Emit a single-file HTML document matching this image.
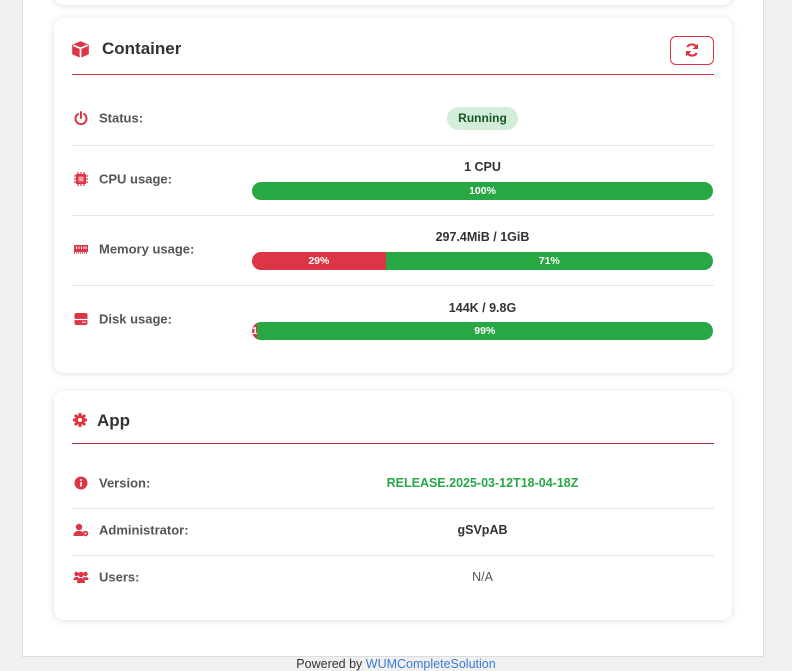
<!DOCTYPE html>
<html><head><style>
*{box-sizing:border-box;margin:0;padding:0}
body{width:792px;height:665px;overflow:hidden;background:#f0f0f0;font-family:"Liberation Sans",sans-serif;color:#333;position:relative}
.panel{position:absolute;left:22px;top:-2px;width:742px;height:659px;background:#fff;border:1px solid #ddd}
.card{position:absolute;left:54px;width:678px;background:#fff;border-radius:10px;box-shadow:0 1px 8px rgba(0,0,0,.12)}
.abs{position:absolute}
.lbl{position:absolute;left:99px;font-size:13px;color:#555;font-weight:bold;transform:translateY(-50%)}
.ico{position:absolute;left:73px;width:16px;height:16px;transform:translateY(-50%)}
.div{position:absolute;left:72px;width:642px;height:1px;background:#e6e6e6}
.ctr{position:absolute;left:252px;width:461px;text-align:center;font-size:12.5px;font-weight:bold;color:#333;transform:translateY(-50%)}
.bar{position:absolute;left:252px;width:461px;height:18px;border-radius:9px;overflow:hidden;display:flex;font-size:10.5px;color:#fff;font-weight:bold;line-height:18px}
.g{background:#28a745;text-align:center}.r{background:#dc3545;text-align:center}
.h{position:absolute;font-size:17px;font-weight:bold;color:#333;transform:translateY(-50%)}
.line{position:absolute;left:72px;width:642px;height:1px;background:#dc3545}
</style></head><body>
<div class="panel"></div>
<div class="card" style="top:-20px;height:25px"></div>
<div class="card" style="top:18px;height:355px"></div>
<div class="card" style="top:391px;height:229px"></div>

<svg class="abs" style="left:71px;top:40px" width="19" height="19" viewBox="0 0 16 16"><path d="M8 1L15 4V12L8 15L1 12V4Z" fill="#dc3545"/><path d="M8 7L2 4.5M8 7L14 4.5M8 7V15" stroke="#fff" stroke-width="1.5" fill="none"/></svg>
<div class="h" style="left:102px;top:49px">Container</div>
<div class="abs" style="left:670px;top:36px;width:44px;height:29px;border:1px solid #dc3545;border-radius:6px"></div>
<svg class="abs" style="left:684px;top:42px" width="16" height="16" viewBox="0 0 16 16"><path d="M13 6A5.5 5.5 0 0 0 3.2 5M3 10A5.5 5.5 0 0 0 12.8 11" stroke="#dc3545" stroke-width="2.2" fill="none"/><path d="M14 1.5V7H8.5Z M2 14.5V9H7.5Z" fill="#dc3545"/></svg>
<div class="line" style="top:74px"></div>

<svg class="ico" style="top:118px" viewBox="0 0 16 16"><path d="M5 4A5.5 5.5 0 1 0 11 4" stroke="#dc3545" stroke-width="2" fill="none" stroke-linecap="round"/><path d="M8 2V8" stroke="#dc3545" stroke-width="2" stroke-linecap="round"/></svg>
<div class="lbl" style="top:118px">Status:</div>
<div class="abs" style="left:447px;top:107px;width:71px;height:23px;border-radius:12px;background:#d4edda;color:#155724;font-size:12px;font-weight:bold;text-align:center;line-height:23px">Running</div>
<div class="div" style="top:145px"></div>

<svg class="ico" style="top:179px" viewBox="0 0 16 16"><path d="M5 1V15M8 1V15M11 1V15M1 5H15M1 8H15M1 11H15" stroke="#dc3545" stroke-width="1.2"/><rect x="3" y="3" width="10" height="10" fill="#dc3545"/><rect x="5.5" y="5.5" width="5" height="5" fill="#f8a0a8"/></svg>
<div class="lbl" style="top:179px">CPU usage:</div>
<div class="ctr" style="top:167px">1 CPU</div>
<div class="bar" style="top:182px"><div class="g" style="width:100%">100%</div></div>
<div class="div" style="top:215px"></div>

<svg class="ico" style="top:249px" viewBox="0 0 16 16"><rect x="1" y="4" width="14" height="7" fill="#dc3545"/><path d="M3.5 5.5V8M6 5.5V8M8.5 5.5V8M11 5.5V8M13 5.5V8" stroke="#fff" stroke-width="1"/><path d="M1 12H15" stroke="#dc3545" stroke-width="1.5" stroke-dasharray="1 1"/></svg>
<div class="lbl" style="top:249px">Memory usage:</div>
<div class="ctr" style="top:237px">297.4MiB / 1GiB</div>
<div class="bar" style="top:252px"><div class="r" style="width:29%">29%</div><div class="g" style="width:71%">71%</div></div>
<div class="div" style="top:285px"></div>

<svg class="ico" style="top:319px" viewBox="0 0 16 16"><rect x="1.5" y="2" width="13" height="12" rx="2" fill="#dc3545"/><path d="M1.5 8.5H14.5" stroke="#fff" stroke-width="1.2"/><circle cx="10" cy="11.3" r=".8" fill="#fff"/><circle cx="12" cy="11.3" r=".8" fill="#fff"/></svg>
<div class="lbl" style="top:319px">Disk usage:</div>
<div class="ctr" style="top:308px">144K / 9.8G</div>
<div class="bar" style="top:322px"><div class="r" style="width:1%">1</div><div class="g" style="width:99%">99%</div></div>

<svg class="ico" style="top:420px;left:72px" viewBox="0 0 16 16"><circle cx="8" cy="8" r="5" fill="#dc3545"/><path d="M8 1V15M1 8H15M3 3L13 13M13 3L3 13" stroke="#dc3545" stroke-width="3"/><circle cx="8" cy="8" r="2" fill="#fff"/></svg>
<div class="h" style="left:97px;top:421px">App</div>
<div class="line" style="top:443px;background:#b03040"></div>

<svg class="ico" style="top:483px" viewBox="0 0 16 16"><circle cx="8" cy="8" r="6.5" fill="#dc3545"/><path d="M8 7V11.5" stroke="#fff" stroke-width="1.6"/><circle cx="8" cy="5" r="1" fill="#fff"/></svg>
<div class="lbl" style="top:483px">Version:</div>
<div class="ctr" style="top:483px;color:#28a745">RELEASE.2025-03-12T18-04-18Z</div>
<div class="div" style="top:508px"></div>

<svg class="ico" style="top:530px" viewBox="0 0 16 16"><circle cx="6" cy="5" r="3.2" fill="#dc3545"/><path d="M0.5 14C0.5 10 3 9 6 9S10 10 10 11V14Z" fill="#dc3545"/><circle cx="12.5" cy="11.5" r="2.8" fill="#dc3545"/><circle cx="12.5" cy="11.5" r="1" fill="#fff"/></svg>
<div class="lbl" style="top:530px">Administrator:</div>
<div class="ctr" style="top:530px">gSVpAB</div>
<div class="div" style="top:555px"></div>

<svg class="ico" style="top:577px" viewBox="0 0 16 16"><circle cx="3.5" cy="5" r="2.2" fill="#dc3545"/><circle cx="12.5" cy="5" r="2.2" fill="#dc3545"/><circle cx="8" cy="5.5" r="2.7" fill="#dc3545"/><path d="M0.5 11C0.5 8.5 2 8 3.5 8S6 8.5 6 9.5V11ZM10 11V9.5C10 8.5 11 8 12.5 8S15.5 8.5 15.5 11Z M4 14C4 10 6 9 8 9S12 10 12 14Z" fill="#dc3545"/></svg>
<div class="lbl" style="top:577px">Users:</div>
<div class="ctr" style="top:577px;font-weight:normal;color:#555">N/A</div>

<div class="abs" style="left:0;top:657px;width:792px;text-align:center;font-size:12.5px;color:#333;line-height:14px">Powered by <span style="color:#3a7bd5">WUMCompleteSolution</span></div>
</body></html>
